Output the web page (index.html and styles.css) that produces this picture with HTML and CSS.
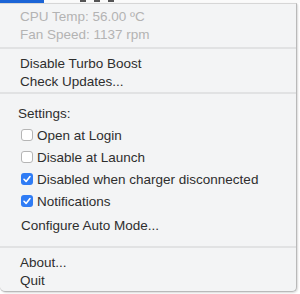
FILE: index.html
```html
<!DOCTYPE html>
<html lang="en">
<head>
    <meta charset="UTF-8">
    <title>Turbo Boost Switcher</title>
    <link rel="stylesheet" href="styles.css">
</head>
<body>
    <div class="menubar">
        <div class="menubar-active"></div>
        <div class="menubar-icons">
            <span class="tick"></span><span class="tick"></span><span class="tick"></span>
        </div>
    </div>
    <div class="menu">
        <div class="section stats">
            <div class="item disabled">CPU Temp: 56.00 ºC</div>
            <div class="item disabled">Fan Speed: 1137 rpm</div>
        </div>
        <div class="separator"></div>
        <div class="section actions">
            <div class="item">Disable Turbo Boost</div>
            <div class="item">Check Updates...</div>
        </div>
        <div class="separator"></div>
        <div class="section settings">
            <div class="label">Settings:</div>
            <div class="check-row"><span class="box"></span>Open at Login</div>
            <div class="check-row"><span class="box"></span>Disable at Launch</div>
            <div class="check-row"><span class="box checked"><svg viewBox="0 0 12 12" width="12" height="12"><path d="M3 6.3 L5.1 8.4 L9 3.6" fill="none" stroke="#fff" stroke-width="1.6" stroke-linecap="round" stroke-linejoin="round"/></svg></span>Disabled when charger disconnected</div>
            <div class="check-row"><span class="box checked"><svg viewBox="0 0 12 12" width="12" height="12"><path d="M3 6.3 L5.1 8.4 L9 3.6" fill="none" stroke="#fff" stroke-width="1.6" stroke-linecap="round" stroke-linejoin="round"/></svg></span>Notifications</div>
            <div class="item configure">Configure Auto Mode...</div>
        </div>
        <div class="separator"></div>
        <div class="section about">
            <div class="item">About...</div>
            <div class="item">Quit</div>
        </div>
    </div>
</body>
</html>
```
FILE: styles.css
```css
body {
    margin: 0;
    background: #ffffff;
    font-family: "Liberation Sans", Arial, sans-serif;
    font-size: 13.5px;
    color: #2e2e2e;
    width: 300px;
    height: 294px;
    overflow: hidden;
}
.menubar {
    display: flex;
    height: 3px;
    background: #fafafa;
}
.menubar-active {
    width: 44px;
    background: #1b64d6;
}
.menubar-icons {
    display: flex;
    gap: 8px;
    margin-left: 36px;
}
.tick {
    width: 6px;
    height: 2px;
    background: #555;
}
.menu {
    width: 297px;
    height: 289px;
    background: #f3f4f5;
    border-right: 1px solid #b9b9b9;
    border-bottom: 1px solid #b9b9b9;
    border-top: 1px solid #d6d6d6;
    border-bottom-right-radius: 5px;
    border-bottom-left-radius: 5px;
    box-shadow: 1px 1px 2px rgba(0, 0, 0, 0.15);
    box-sizing: border-box;
    padding-top: 4px;
}
.section {
    padding-left: 20px;
}
.item {
    line-height: 18px;
}
.disabled {
    color: #b3b3b3;
}
.separator {
    height: 2px;
    background: #e1e2e3;
}
.stats {
    padding-bottom: 3px;
}
.actions {
    padding-top: 6px;
    padding-bottom: 1px;
}
.settings {
    padding-top: 11px;
    padding-bottom: 9px;
}
.settings .label {
    margin-left: -2px;
    line-height: 18px;
    margin-bottom: 1px;
}
.check-row {
    display: flex;
    align-items: center;
    height: 22px;
    margin-left: 1px;
}
.box {
    width: 12px;
    height: 12px;
    border: 1px solid #b5b5b5;
    border-radius: 3px;
    background: #fff;
    box-sizing: border-box;
    margin-right: 4px;
    display: flex;
}
.box.checked {
    border: none;
    background: #2f7cf5;
}
.configure {
    margin-left: 1px;
    margin-top: 3px;
    line-height: 22px;
}
.about {
    padding-top: 6px;
}
```
